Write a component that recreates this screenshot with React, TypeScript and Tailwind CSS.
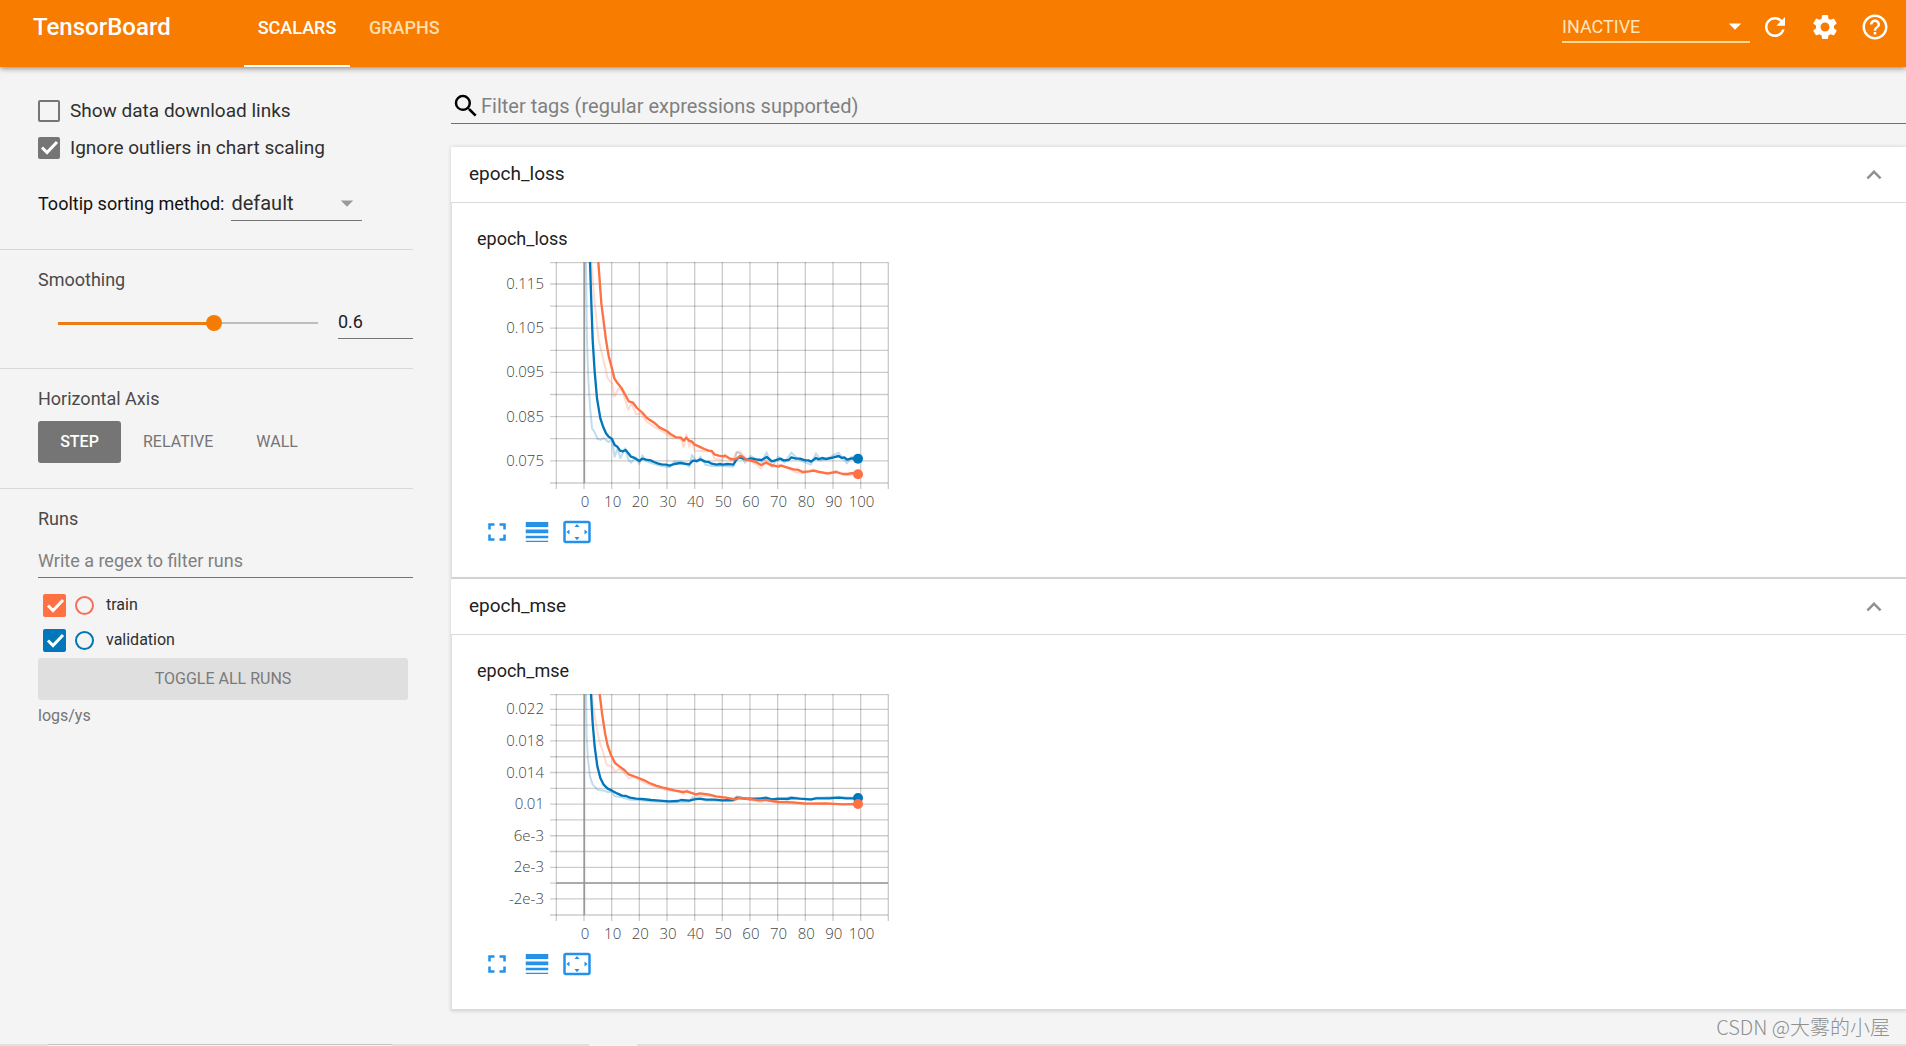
import React, { useState } from "react";
import {
  MdArrowDropDown,
  MdExpandLess,
  MdFullscreen,
  MdHelpOutline,
  MdLineWeight,
  MdRefresh,
  MdSearch,
  MdSettings,
  MdSettingsOverscan,
} from "react-icons/md";

const TRAIN = "#ff7043";
const VALIDATION = "#0077bb";

type Series = { color: string; smooth: string; raw: string; end: [number, number] };

type Chart = {
  tag: string;
  ticks: string[];
  firstTick: number;
  tickGap: number;
  zeroLine?: number;
  originY: number;
  series: Series[];
};

const STEPS = [0, 10, 20, 30, 40, 50, 60, 70, 80, 90, 100];

/* Curves are stored in plot units: 3 units per pixel, 83 units per 10 steps. */
const CHARTS: Chart[] = [
  {
    tag: "epoch_loss",
    ticks: ["0.115", "", "0.105", "", "0.095", "", "0.085", "", "0.075"],
    firstTick: 66,
    tickGap: 66.3,
    originY: -234,
    series: [
      {
        color: VALIDATION,
        smooth:
          "392,-234 395,-140 400,0 406,95 413,175 423,235 432,262 440,280 448,290 458,297 466,315 474,320 482,332 490,334 499,330 507,340 515,350 524,353 532,358 540,363 549,356 560,359 574,361 584,366 597,371 607,373 620,374 631,377 645,372 662,369 690,373 700,362 713,363 723,358 738,365 748,366 757,371 772,374 782,372 790,374 805,372 822,374 832,358 840,352 852,356 865,359 875,355 890,358 907,360 922,351 938,364 957,358 963,356 973,361 988,360 996,352 1010,356 1022,356 1038,361 1047,361 1055,365 1070,354 1078,358 1088,354 1100,357 1115,354 1123,352 1138,348 1147,354 1155,352 1163,359 1177,355 1196,356",
        raw: "380,-234 383,0 387,120 392,200 398,265 405,275 415,297 425,299 433,294 447,306 458,300 466,350 475,325 483,355 497,325 507,358 515,368 528,352 540,372 549,346 560,363 584,372 607,378 631,382 645,364 670,366 690,380 698,345 713,366 723,350 738,374 757,378 772,378 790,378 822,380 832,336 842,340 857,368 875,348 907,366 922,337 938,380 957,350 975,368 996,338 1020,360 1055,374 1070,340 1085,362 1110,352 1138,338 1163,370 1177,350 1196,357",
        end: [1196, 356],
      },
      {
        color: TRAIN,
        smooth:
          "417,-234 426,-110 440,0 448,48 458,86 465,115 475,130 487,145 497,163 508,184 520,187 533,204 550,219 562,233 575,242 587,250 600,262 612,268 622,273 633,282 650,292 665,293 673,302 681,293 690,303 697,304 706,314 720,320 735,327 748,332 757,333 765,343 778,347 790,349 797,347 810,355 822,358 832,356 842,348 850,350 862,359 875,362 890,366 905,375 920,368 935,375 957,380 965,377 985,383 1005,389 1015,389 1030,396 1050,394 1062,392 1080,396 1105,400 1130,396 1150,402 1165,402 1180,399 1196,403",
        raw: "396,-234 405,-120 418,0 430,50 445,115 458,130 465,170 478,145 490,155 507,210 516,190 530,222 545,222 562,245 587,262 612,276 640,295 662,290 673,322 681,284 690,320 697,302 706,332 735,334 757,333 765,356 790,360 797,343 815,364 832,338 842,334 857,356 890,372 905,386 920,358 935,380 965,374 1005,395 1030,400 1062,388 1105,404 1130,392 1160,406 1196,403",
        end: [1196, 403],
      },
    ],
  },
  {
    tag: "epoch_mse",
    ticks: ["0.022", "", "0.018", "", "0.014", "", "0.01", "", "6e-3", "", "2e-3", "", "-2e-3"],
    firstTick: 46,
    tickGap: 47.4,
    zeroLine: 567,
    originY: 373,
    series: [
      {
        color: VALIDATION,
        smooth:
          "395,373 400,460 406,530 414,590 423,625 433,645 445,657 458,663 475,672 488,678 500,679 512,684 530,687 548,688 575,691 600,693 630,695 655,694 665,691 690,693 705,689 722,687 740,690 765,690 790,692 822,691 832,685 845,685 860,687 900,687 920,685 938,689 955,687 985,688 996,685 1020,687 1055,689 1070,686 1110,686 1138,684 1160,686 1196,686",
        raw: "380,373 382,500 386,570 392,620 400,645 415,660 435,663 447,668 458,665 466,680 485,682 512,690 540,692 575,695 630,698 690,696 698,683 740,693 822,694 832,680 870,690 922,682 938,692 996,682 1055,692 1070,684 1138,681 1196,686",
        end: [1196, 685],
      },
      {
        color: TRAIN,
        smooth:
          "421,373 428,430 437,490 445,528 455,556 467,580 480,590 495,601 508,614 530,622 555,632 570,640 590,648 615,655 645,662 670,667 682,665 710,674 722,671 750,675 770,680 800,684 828,690 838,685 870,688 900,692 920,691 955,697 1000,698 1040,702 1100,701 1150,704 1196,703",
        raw: "398,373 405,430 412,475 420,515 432,550 442,585 458,590 467,607 480,598 492,606 508,626 520,620 545,634 575,647 615,660 660,666 673,674 682,661 710,679 750,678 800,688 832,682 870,690 905,697 920,689 1000,701 1100,703 1196,703",
        end: [1196, 703],
      },
    ],
  },
];

function LineChart({ chart }: { chart: Chart }) {
  const { originY } = chart;
  const bottom = 663;
  return (
    <svg
      className="block h-[263px] w-[420px] font-['Open_Sans',sans-serif] text-[15px] font-light"
      viewBox="0 0 420 263"
      role="img"
      aria-label={chart.tag}
    >
      {chart.ticks.map((t, i) => (
        <text key={i} x={67} y={11 + (chart.firstTick + i * chart.tickGap) / 3 + 5} textAnchor="end" fill="#444">
          {t}
        </text>
      ))}
      {STEPS.map((s) => (
        <text key={s} x={108 + s * 2.765} y={256} textAnchor="middle" fill="#444">
          {s}
        </text>
      ))}
      <svg x={73} y={11} width={339} height={228} viewBox="-19 0 1017 684">
        <g stroke="#000" strokeOpacity={0.2} strokeWidth={4}>
          <path d={`M-19 2H995M-19 ${bottom}H995`} />
          {chart.ticks.map((_, i) => (
            <path key={i} d={`M-19 ${chart.firstTick + i * chart.tickGap}H995`} />
          ))}
          {Array.from({ length: 13 }, (_, i) => (
            <path key={i} d={`M${i * 83} 0V${bottom + 18}`} />
          ))}
        </g>
        <path d={`M84 0V${bottom}`} stroke="#999" strokeWidth={5} />
        {chart.zeroLine && <path d={`M0 ${chart.zeroLine}H995`} stroke="#999" strokeWidth={5} />}
        <svg x={0} y={0} width={995} height={663} viewBox={`291 ${originY} 995 663`} fill="none" strokeLinejoin="round">
          {chart.series.map((s) => (
            <polyline key={s.color} points={s.raw} stroke={s.color} strokeOpacity={0.25} strokeWidth={6} />
          ))}
          {chart.series.map((s) => (
            <polyline key={s.color} points={s.smooth} stroke={s.color} strokeWidth={7} />
          ))}
          {chart.series.map((s) => (
            <circle key={s.color} cx={s.end[0]} cy={s.end[1]} r={15} fill={s.color} />
          ))}
        </svg>
      </svg>
    </svg>
  );
}

function ChartPanel({ chart }: { chart: Chart }) {
  return (
    <section className="border-b-2 border-[#dcdcdc] bg-white shadow-[0_0_4px_rgba(0,0,0,0.15)]">
      <h2 className="border-b border-[#dadada]">
        <button className="flex h-[55px] w-full items-center justify-between pr-[17px] pl-[18px] text-[19px] text-[#212121]">
          {chart.tag}
          <MdExpandLess className="size-[30px] text-[#8f8f8f]" />
        </button>
      </h2>
      <div className="border-l border-[#e0e0e0] pt-6 pr-6 pb-[27px] pl-[25px]">
        <h3 className="text-[18px] leading-6 text-[#212121]">{chart.tag}</h3>
        <LineChart chart={chart} />
        <div className="flex h-9 text-[#2491eb]">
          <button aria-label="Toggle size" className="grid w-10 place-items-center">
            <MdFullscreen className="size-[30px]" />
          </button>
          <button aria-label="Toggle log scale" className="grid w-10 place-items-center">
            <MdLineWeight className="size-[30px]" />
          </button>
          <button aria-label="Fit domain to data" className="grid w-10 place-items-center">
            <MdSettingsOverscan className="size-[30px]" />
          </button>
        </div>
      </div>
    </section>
  );
}

function Tick({ className }: { className: string }) {
  return (
    <svg viewBox="0 0 22 22" className={`pointer-events-none size-[22px] ${className}`} fill="none" aria-hidden="true">
      <path d="M4 10.5L9 15.5L19 5" stroke="#fff" strokeWidth="3" />
    </svg>
  );
}

function OptionBox({ label, defaultChecked }: { label: string; defaultChecked?: boolean }) {
  return (
    <label className="flex h-[37px] items-center gap-[10px] text-[19px] text-[#2f2f2f]">
      <span className="grid size-[22px] place-items-center *:col-start-1 *:row-start-1">
        <input
          type="checkbox"
          defaultChecked={defaultChecked}
          className="peer size-[22px] appearance-none rounded-[2px] border-2 border-[#757575] checked:bg-[#757575]"
        />
        <Tick className="hidden peer-checked:block" />
      </span>
      <span className="pt-[2px]">{label}</span>
    </label>
  );
}

function RunRow({ name, box, ring }: { name: string; box: string; ring: string }) {
  return (
    <div className="flex h-[35px] items-center pl-[5px] text-[16px] text-[#2f2f2f]">
      <span className="grid size-[23px] place-items-center *:col-start-1 *:row-start-1">
        <input
          id={name}
          type="checkbox"
          defaultChecked
          className={`peer size-[23px] appearance-none rounded-[2px] ${box}`}
        />
        <Tick className="hidden peer-checked:block" />
      </span>
      <button aria-label={`Only ${name}`} className={`mr-3 ml-[9px] size-[19px] rounded-full border-2 ${ring}`} />
      <label htmlFor={name} className="pb-[2px]">
        {name}
      </label>
    </div>
  );
}

function Sidebar() {
  const [smoothing, setSmoothing] = useState(0.6);
  return (
    <aside className="w-[413px] shrink-0">
      <div className="h-[183px] border-b border-[#d8d8d8] pt-[25px] pl-[38px]">
        <OptionBox label="Show data download links" />
        <OptionBox label="Ignore outliers in chart scaling" defaultChecked />
        <div className="mt-[17px] flex h-[38px] items-stretch gap-[7px]">
          <label htmlFor="sorting" className="flex items-center pt-[3px] text-[18px] text-[#111]">
            Tooltip sorting method:
          </label>
          <span className="grid w-[131px] items-center border-b border-[#757575] pt-[2px] *:col-start-1 *:row-start-1">
            <select id="sorting" className="w-full appearance-none text-[20px] text-[#2f2f2f]">
              <option>default</option>
            </select>
            <MdArrowDropDown className="pointer-events-none size-[30px] justify-self-end text-[#9a9a9a]" />
          </span>
        </div>
      </div>
      <div className="h-[119px] border-b border-[#d8d8d8] pt-[18px] pl-[38px]">
        <h3 className="text-[18px] leading-6 text-[#4a4a4a]">Smoothing</h3>
        <div className="mt-[13px] flex h-[34px] items-stretch">
          <div className="ml-5 grid w-[260px] items-center pt-[2px] *:col-start-1 *:row-start-1">
            <div className="h-[2px] bg-[#bdbdbd]" />
            <div className="h-[3px] bg-[#ea7c14]" style={{ width: `${smoothing * 100}%` }} />
            <input
              type="range"
              aria-label="Smoothing"
              min={0}
              max={1}
              step={0.001}
              value={smoothing}
              onChange={(e) => setSmoothing(Number(e.target.value))}
              className="-mx-2 h-4 appearance-none bg-transparent [&::-webkit-slider-thumb]:size-4 [&::-webkit-slider-thumb]:appearance-none [&::-webkit-slider-thumb]:rounded-full [&::-webkit-slider-thumb]:bg-[#f57c00]"
            />
          </div>
          <input
            type="text"
            aria-label="Smoothing value"
            value={smoothing}
            onChange={(e) => setSmoothing(Number(e.target.value) || 0)}
            className="ml-5 min-w-0 flex-1 border-b border-[#757575] text-[18px] text-[#212121]"
          />
        </div>
      </div>
      <div className="h-[120px] border-b border-[#d8d8d8] pt-[18px] pl-[38px]">
        <h3 className="text-[18px] leading-6 text-[#4a4a4a]">Horizontal Axis</h3>
        <div className="mt-[10px] flex h-[42px] text-[16px] text-[#757575]">
          <button className="w-[83px] rounded-[3px] bg-[#757575] font-medium text-white">STEP</button>
          <button className="px-[22px]">RELATIVE</button>
          <button className="px-[21px]">WALL</button>
        </div>
      </div>
      <div className="pt-[18px] pl-[38px]">
        <h3 className="text-[18px] leading-6 text-[#4a4a4a]">Runs</h3>
        <input
          type="text"
          aria-label="Filter runs"
          placeholder="Write a regex to filter runs"
          className="mt-3 block h-[35px] w-full border-b border-[#757575] text-[18px] placeholder:text-[#808080]"
        />
        <div className="mt-[10px]">
          <RunRow name="train" box="bg-[#ff7043]" ring="border-[#f4705a]" />
          <RunRow name="validation" box="bg-[#0077bb]" ring="border-[#0077b0]" />
        </div>
        <button className="block h-[42px] w-[370px] rounded-[3px] bg-[#dfdfdf] text-[16px] text-[#7a7a7a]">
          TOGGLE ALL RUNS
        </button>
        <p className="mt-1 text-[16px] leading-6 text-[#757575]">logs/ys</p>
      </div>
    </aside>
  );
}

export default function App() {
  return (
    <div className="flex min-h-screen flex-col bg-[#f4f4f4] font-['Roboto',sans-serif]">
      <header className="z-10 flex h-[67px] bg-[#f77c00] text-white shadow-[0_1px_6px_rgba(0,0,0,0.5)]">
        <h1 className="w-[244px] pt-[11px] pl-[33px] text-[24px] leading-8 font-medium">TensorBoard</h1>
        <nav className="flex text-[18px] font-medium">
          <a href="#scalars" className="flex w-[106px] items-center justify-center border-b-2 border-white pb-[10px]">
            SCALARS
          </a>
          <a href="#graphs" className="flex items-center px-[19px] pb-3 text-[#ffdfae]">
            GRAPHS
          </a>
        </nav>
        <div className="mr-[6px] ml-auto flex h-[54px] items-center">
          <span className="grid h-8 w-[188px] items-center border-b-2 border-[#ffd896] *:col-start-1 *:row-start-1">
            <select aria-label="Inactive plugins" className="w-full appearance-none text-[18px] text-[#ffe5bd]">
              <option>INACTIVE</option>
            </select>
            <MdArrowDropDown className="pointer-events-none size-[30px] justify-self-end" />
          </span>
          <button aria-label="Reload" className="grid w-[50px] place-items-center">
            <MdRefresh className="size-[30px]" />
          </button>
          <button aria-label="Settings" className="grid w-[50px] place-items-center">
            <MdSettings className="size-[30px]" />
          </button>
          <button aria-label="Help" className="grid w-[50px] place-items-center">
            <MdHelpOutline className="size-[30px]" />
          </button>
        </div>
      </header>
      <div className="flex">
        <Sidebar />
        <main className="ml-[38px] min-w-0 flex-1 pt-[22px]">
          <label className="flex h-[35px] items-center border-b border-[#6f6f6f]">
            <MdSearch className="size-[30px] text-black" />
            <input
              type="text"
              aria-label="Filter tags"
              placeholder="Filter tags (regular expressions supported)"
              className="min-w-0 flex-1 text-[20px] outline-none placeholder:text-[#808080]"
            />
          </label>
          <div className="mt-[23px]">
            {CHARTS.map((c) => (
              <ChartPanel key={c.tag} chart={c} />
            ))}
          </div>
        </main>
      </div>
      <footer className="mt-auto">
        <p className="pr-4 pb-1 text-right font-['Noto_Sans_CJK_SC',sans-serif] text-[20px] leading-[26px] font-light text-[#8f8f8f]">
          CSDN @大雾的小屋
        </p>
        <div className="flex h-[2px]">
          <div className="w-12 bg-[#e0e0e0]" />
          <div className="w-[344px] border-t border-[#c4c4c4]" />
          <div className="w-[197px] bg-[#e0e0e0]" />
          <div className="w-12" />
          <div className="flex-1 bg-[#e0e0e0]" />
        </div>
      </footer>
    </div>
  );
}
